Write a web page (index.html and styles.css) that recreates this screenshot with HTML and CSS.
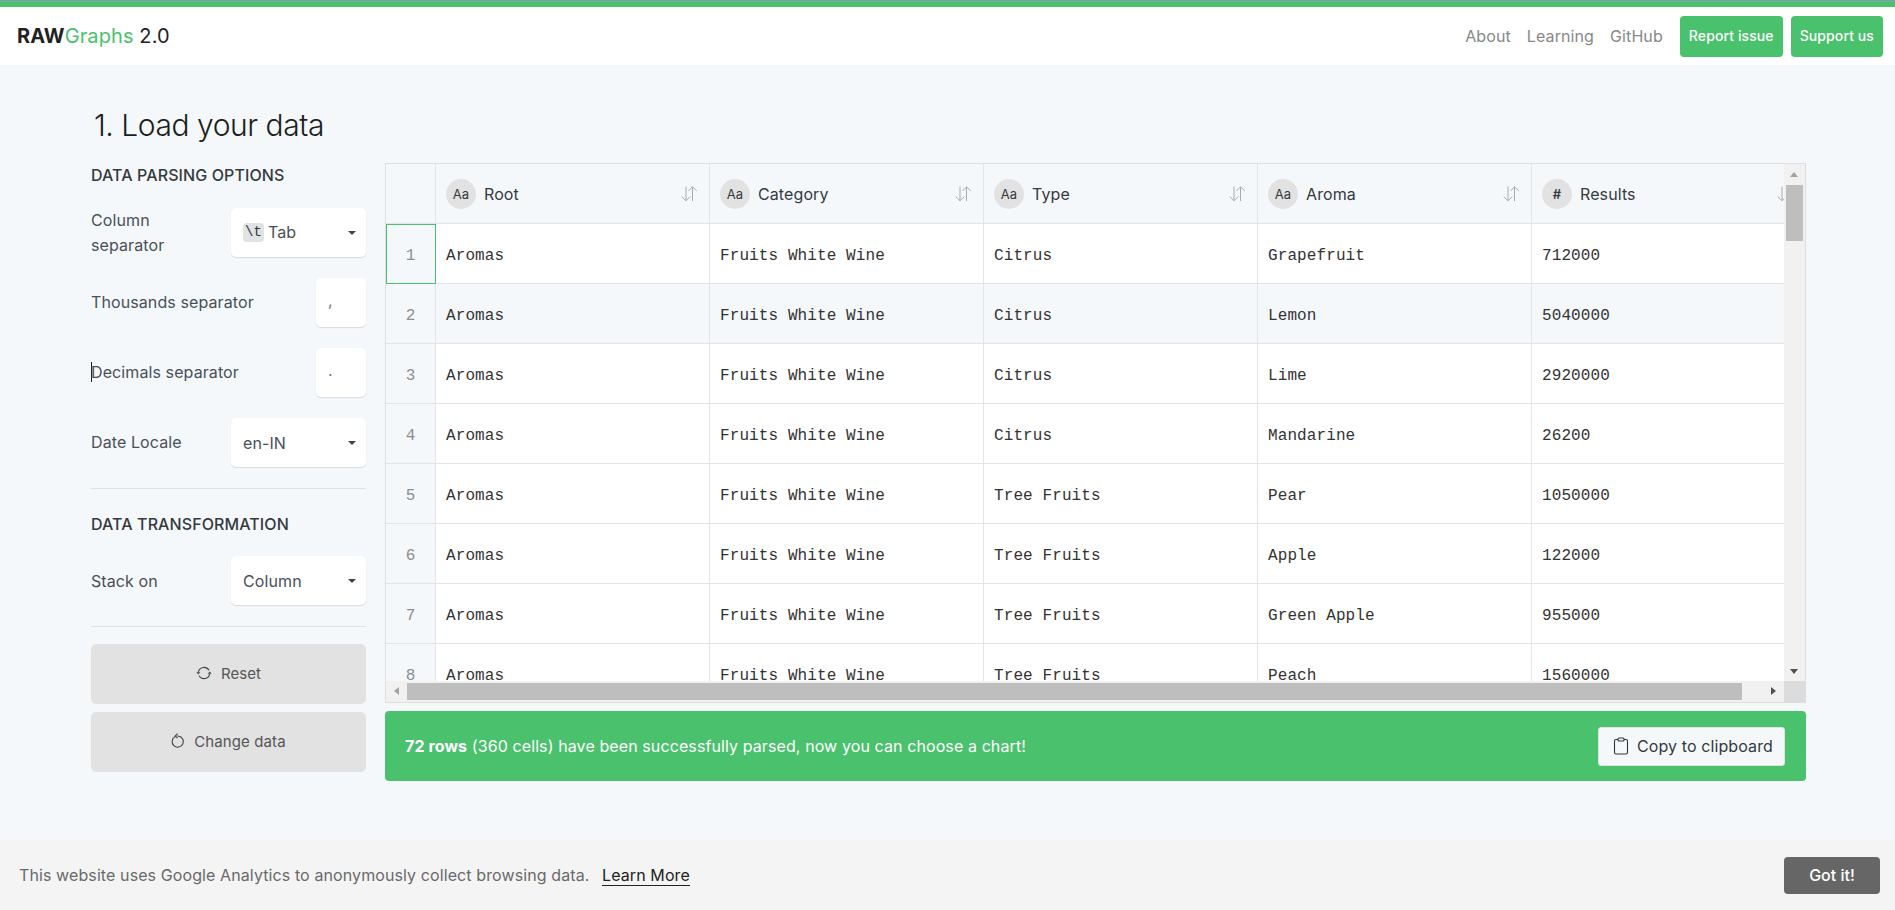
FILE: index.html
```html
<!DOCTYPE html>
<html lang="en">
<head>
  <meta charset="UTF-8">
  <title>RAWGraphs 2.0</title>
  <link rel="stylesheet" href="styles.css">
</head>
<body>
  <div class="top-stripe"></div>
  <header class="navbar">
    <div class="brand"><b>RAW</b><span class="brand-green">Graphs</span> 2.0</div>
    <nav class="nav-links">
      <a href="#">About</a>
      <a href="#">Learning</a>
      <a href="#">GitHub</a>
      <a class="nav-btn" href="#">Report issue</a>
      <a class="nav-btn" href="#">Support us</a>
    </nav>
  </header>

  <main class="page">
    <h1 class="page-title">1. Load your data</h1>
    <div class="columns">
      <aside class="sidebar">
        <h2 class="side-title">Data parsing options</h2>
        <div class="option option-first">
          <label class="option-label label-narrow">Column separator</label>
          <div class="select"><span class="key">\t</span> Tab<i class="caret"></i></div>
        </div>
        <div class="option">
          <label class="option-label">Thousands separator</label>
          <div class="small-input">,</div>
        </div>
        <div class="option">
          <label class="option-label"><i class="text-caret"></i>Decimals separator</label>
          <div class="small-input">.</div>
        </div>
        <div class="option">
          <label class="option-label">Date Locale</label>
          <div class="select">en-IN<i class="caret"></i></div>
        </div>
        <hr class="divider">
        <h2 class="side-title title-second">Data transformation</h2>
        <div class="option option-first">
          <label class="option-label">Stack on</label>
          <div class="select">Column<i class="caret"></i></div>
        </div>
        <hr class="divider">
        <button class="side-btn btn-reset">
          <svg width="16" height="16" viewBox="0 0 16 16" fill="none" stroke="#444" stroke-width="1.1"><path d="M2.3 7.2A5.8 5.8 0 0 1 13 5.2"/><path d="M13.7 8.8A5.8 5.8 0 0 1 3 10.8"/><path d="M0.3 7.2h4L2.3 9.6z" fill="#444" stroke="none"/><path d="M11.7 8.8h4l-2-2.4z" fill="#444" stroke="none"/></svg>
          Reset
        </button>
        <button class="side-btn">
          <svg width="14" height="16" viewBox="0 0 14 16" fill="none" stroke="#444" stroke-width="1.1"><path d="M4.2 3.6A5.6 5.6 0 1 0 7 3h-0.6"/><path d="M6.6 0.6L4.2 3l2.4 2.2" /></svg>
          Change data
        </button>
      </aside>

      <section class="data-area">
        <div class="grid-box">
          <div class="grid-view">
            <table class="data-table">
              <thead>
                <tr>
                  <th class="num-col"></th>
                  <th><span class="type-badge">Aa</span>Root<svg class="sort-icon" viewBox="0 0 17 16" fill="none" stroke="#aaa"><path d="M5 0.5v14M0.7 10.5L5 14.8l4.3-4.3M11.5 15V1M7.5 5l4-4.2 4.3 4.2"/></svg></th>
                  <th><span class="type-badge">Aa</span>Category<svg class="sort-icon" viewBox="0 0 17 16" fill="none" stroke="#aaa"><path d="M5 0.5v14M0.7 10.5L5 14.8l4.3-4.3M11.5 15V1M7.5 5l4-4.2 4.3 4.2"/></svg></th>
                  <th><span class="type-badge">Aa</span>Type<svg class="sort-icon" viewBox="0 0 17 16" fill="none" stroke="#aaa"><path d="M5 0.5v14M0.7 10.5L5 14.8l4.3-4.3M11.5 15V1M7.5 5l4-4.2 4.3 4.2"/></svg></th>
                  <th><span class="type-badge">Aa</span>Aroma<svg class="sort-icon" viewBox="0 0 17 16" fill="none" stroke="#aaa"><path d="M5 0.5v14M0.7 10.5L5 14.8l4.3-4.3M11.5 15V1M7.5 5l4-4.2 4.3 4.2"/></svg></th>
                  <th><span class="type-badge badge-num">#</span>Results<svg class="sort-icon" viewBox="0 0 17 16" fill="none" stroke="#aaa"><path d="M5 0.5v14M0.7 10.5L5 14.8l4.3-4.3M11.5 15V1M7.5 5l4-4.2 4.3 4.2"/></svg></th>
                </tr>
              </thead>
              <tbody>
                <tr><td class="num-col num-selected">1</td><td>Aromas</td><td>Fruits White Wine</td><td>Citrus</td><td>Grapefruit</td><td>712000</td></tr>
                <tr class="row-hover"><td class="num-col">2</td><td>Aromas</td><td>Fruits White Wine</td><td>Citrus</td><td>Lemon</td><td>5040000</td></tr>
                <tr><td class="num-col">3</td><td>Aromas</td><td>Fruits White Wine</td><td>Citrus</td><td>Lime</td><td>2920000</td></tr>
                <tr><td class="num-col">4</td><td>Aromas</td><td>Fruits White Wine</td><td>Citrus</td><td>Mandarine</td><td>26200</td></tr>
                <tr><td class="num-col">5</td><td>Aromas</td><td>Fruits White Wine</td><td>Tree Fruits</td><td>Pear</td><td>1050000</td></tr>
                <tr><td class="num-col">6</td><td>Aromas</td><td>Fruits White Wine</td><td>Tree Fruits</td><td>Apple</td><td>122000</td></tr>
                <tr><td class="num-col">7</td><td>Aromas</td><td>Fruits White Wine</td><td>Tree Fruits</td><td>Green Apple</td><td>955000</td></tr>
                <tr><td class="num-col">8</td><td>Aromas</td><td>Fruits White Wine</td><td>Tree Fruits</td><td>Peach</td><td>1560000</td></tr>
              </tbody>
            </table>
          </div>
          <div class="vscroll">
            <i class="arrow arrow-up"></i>
            <div class="vthumb"></div>
            <i class="arrow arrow-down"></i>
          </div>
          <div class="hscroll">
            <i class="arrow arrow-left"></i>
            <div class="hthumb"></div>
            <i class="arrow arrow-right"></i>
          </div>
          <div class="scroll-corner"></div>
        </div>

        <div class="parse-banner">
          <span><b>72 rows</b> (360 cells) have been successfully parsed, now you can choose a chart!</span>
          <button class="copy-btn">
            <svg width="16" height="18" viewBox="0 0 16 18" fill="none" stroke="#333" stroke-width="1.1"><path d="M5 2.5H3a1.5 1.5 0 0 0-1.5 1.5v11.5A1.5 1.5 0 0 0 3 17h10a1.5 1.5 0 0 0 1.5-1.5V4A1.5 1.5 0 0 0 13 2.5h-2"/><rect x="5" y="1" width="6" height="3" rx="1"/></svg>
            Copy to clipboard
          </button>
        </div>
      </section>
    </div>
  </main>

  <div class="cookie-bar">
    <p class="cookie-text">This website uses Google Analytics to anonymously collect browsing data. <a href="#">Learn More</a></p>
    <button class="cookie-btn">Got it!</button>
  </div>
</body>
</html>
```

FILE: styles.css
```css
* {
  box-sizing: border-box;
}
body {
  margin: 0;
  height: 910px;
  overflow: hidden;
  background: #f4f8fb;
  font-family: Inter, "Liberation Sans", sans-serif;
  font-size: 16px;
  letter-spacing: 0.1px;
  color: #343a40;
}
.top-stripe {
  height: 7px;
  background: #4ac16d;
  border-top: 2px solid #6fa99a;
}
.navbar {
  height: 58px;
  background: white;
  display: flex;
  justify-content: space-between;
  align-items: center;
  padding: 0 12px 0 17px;
}
.brand {
  font-size: 20px;
  color: #222;
}
.brand b {
  font-weight: 700;
}
.brand-green {
  color: #4ac16d;
  font-weight: 400;
}
.nav-links {
  display: flex;
  align-items: center;
}
.nav-links a {
  color: #888;
  font-size: 16px;
  text-decoration: none;
  margin-right: 16px;
}
.nav-links a:nth-child(3) {
  margin-right: 17px;
}
.nav-links .nav-btn {
  background: #4ac16d;
  color: white;
  font-size: 14px;
  font-weight: 500;
  height: 41px;
  line-height: 40px;
  padding: 0 9px;
  border-radius: 4px;
  margin-right: 8px;
}
.nav-links .nav-btn:last-child {
  margin-right: 0;
}
.page {
  padding: 0 89px 0 91px;
}
.page-title {
  margin: 0;
  padding: 40px 0 0 3px;
  height: 98px;
  font-size: 30px;
  line-height: 40px;
  font-weight: 300;
  letter-spacing: -0.45px;
  color: #1c1e20;
}
.columns {
  display: flex;
  gap: 19px;
}
.sidebar {
  width: 275px;
  flex: none;
}
.side-title {
  margin: 0;
  font-size: 16px;
  line-height: 24px;
  font-weight: 500;
  text-transform: uppercase;
  color: #343a40;
}
.title-second {
  margin-top: 23px;
}
.option {
  display: flex;
  justify-content: space-between;
  align-items: center;
  margin-top: 21px;
}
.option-first {
  margin-top: 20px;
}
.option-label {
  line-height: 25px;
  color: #495057;
  position: relative;
}
.option-first .option-label {
  top: 1px;
}
.label-narrow {
  width: 110px;
}
.text-caret {
  position: absolute;
  left: 0;
  top: 2px;
  width: 1px;
  height: 20px;
  background: #222;
}
.select {
  width: 135px;
  height: 49px;
  background: white;
  border-radius: 5px;
  box-shadow: 0 1px 1px #d8dbde;
  display: flex;
  align-items: center;
  padding-left: 12px;
  color: #495057;
  position: relative;
}
.key {
  font-family: "Liberation Mono", monospace;
  font-size: 14px;
  line-height: 19px;
  background: #dfe3e5;
  border-radius: 4px;
  padding: 0 2px;
  margin-right: 4px;
  color: #333;
}
.caret {
  position: absolute;
  right: 10px;
  top: 23px;
  border-top: 4px solid #444;
  border-left: 4px solid transparent;
  border-right: 4px solid transparent;
}
.small-input {
  width: 50px;
  height: 49px;
  background: white;
  border-radius: 5px;
  box-shadow: 0 1px 1px #d8dbde;
  padding: 12px 0 0 12px;
  color: #777;
}
.divider {
  border: none;
  border-top: 1px solid #dfe1e3;
  margin: 21px 0 0;
}
.side-btn {
  display: flex;
  width: 100%;
  height: 60px;
  align-items: center;
  justify-content: center;
  gap: 9px;
  padding: 0 0 2px;
  background: #e2e2e2;
  border: none;
  border-radius: 5px;
  font-family: inherit;
  font-size: 15px;
  letter-spacing: inherit;
  color: #555;
  margin-bottom: 8px;
}
.btn-reset {
  margin-top: 17px;
}
.data-area {
  width: 1421px;
  flex: none;
}
.grid-box {
  display: grid;
  grid-template-columns: 1398px 21px;
  grid-template-rows: 517px 21px;
  border: 1px solid #dcdfe1;
  width: 1421px;
}
.grid-view {
  overflow: hidden;
  background: white;
}
.data-table {
  border-collapse: separate;
  border-spacing: 0;
  table-layout: fixed;
  width: 1420px;
}
.data-table th, .data-table td {
  width: 274px;
  height: 60px;
  padding: 0 0 0 10px;
  border-right: 1px solid #e2e4e6;
  border-bottom: 1px solid #e2e4e6;
  text-align: left;
  white-space: nowrap;
}
.data-table th {
  background: #f4f8fb;
  font-weight: 400;
  color: #343a40;
  position: relative;
}
.data-table td {
  font-family: "Liberation Mono", monospace;
  padding-top: 5px;
  color: #333;
}
.data-table .num-col {
  width: 50px;
  padding: 5px 0 0;
  text-align: center;
  background: #f4f8fb;
  color: #8b8f93;
}
.data-table .num-selected {
  border-color: #4ac16d;
  box-shadow: inset 1px 1px 0 #4ac16d;
}
.row-hover td {
  background: #f4f8fb;
}
.type-badge {
  display: inline-block;
  width: 30px;
  height: 30px;
  line-height: 30px;
  border-radius: 50%;
  background: #e2e2e2;
  text-align: center;
  font-size: 13px;
  margin-right: 8px;
  vertical-align: 1px;
}
.badge-num {
  font-weight: 600;
}
.sort-icon {
  position: absolute;
  left: 245px;
  top: 22px;
  width: 17px;
  height: 16px;
}
.vscroll {
  background: #f1f1f1;
  padding: 0 2px;
  position: relative;
}
.vthumb {
  height: 56px;
  margin-top: 21px;
  background: #bebebe;
}
.hscroll {
  background: #f1f1f1;
  padding: 2px 0 2px 21px;
  position: relative;
}
.hthumb {
  width: 1335px;
  height: 17px;
  background: #bebebe;
}
.scroll-corner {
  background: #dcdcdc;
}
.arrow {
  position: absolute;
  width: 0;
  height: 0;
  border-style: solid;
  border-color: transparent;
}
.arrow-up {
  left: 6px;
  top: 8px;
  border-width: 0 4.5px 5px;
  border-bottom-color: #a3a3a3;
}
.arrow-down {
  left: 6px;
  bottom: 7px;
  border-width: 5px 4.5px 0;
  border-top-color: #505050;
}
.arrow-left {
  left: 8px;
  top: 6px;
  border-width: 4.5px 5px 4.5px 0;
  border-right-color: #a3a3a3;
}
.arrow-right {
  right: 8px;
  top: 6px;
  border-width: 4.5px 0 4.5px 5px;
  border-left-color: #505050;
}
.parse-banner {
  height: 70px;
  margin-top: 8px;
  background: #4ac16d;
  border-radius: 4px;
  display: flex;
  align-items: center;
  justify-content: space-between;
  padding: 0 21px 0 20px;
  color: white;
}
.copy-btn {
  display: flex;
  align-items: center;
  gap: 8px;
  width: 187px;
  height: 39px;
  padding-left: 14px;
  background: #f4f8fb;
  border: 1px solid #dfe1e3;
  border-radius: 3px;
  font-family: inherit;
  font-size: 16px;
  letter-spacing: inherit;
  color: #343a40;
}
.cookie-bar {
  position: fixed;
  left: 0;
  right: 0;
  bottom: 0;
  height: 70px;
  background: #f4f4f4;
  display: flex;
  align-items: center;
  justify-content: space-between;
  padding: 0 15px 0 19px;
}
.cookie-text {
  margin: 0;
  font-size: 16px;
  color: #6a6a6a;
}
.cookie-text a {
  color: #222;
  text-decoration: none;
  border-bottom: 1px solid #222;
  margin-left: 8px;
}
.cookie-btn {
  width: 96px;
  height: 37px;
  background: #666;
  color: white;
  border: none;
  border-radius: 4px;
  font-family: inherit;
  font-size: 16px;
  font-weight: 500;
}
```
